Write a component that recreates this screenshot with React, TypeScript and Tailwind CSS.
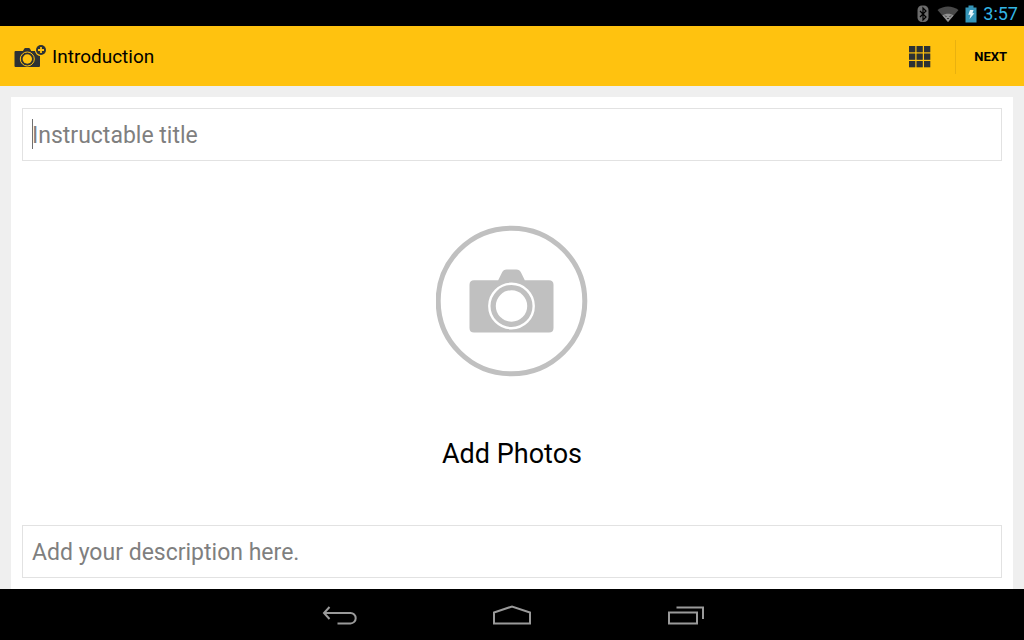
import { useState } from "react";

function BluetoothIcon() {
  return (
    <svg width="12" height="18" viewBox="0 0 12 18" fill="none" aria-hidden="true">
      <rect x="0.5" y="0.5" width="11" height="16.5" rx="4.500" fill="#6b6b6b" />
      <path d="M3 6l6 6-3 3V3l3 3-6 6" stroke="#000" strokeWidth="1.2" />
    </svg>
  );
}

function WifiIcon() {
  return (
    <svg width="22" height="18" viewBox="0 0 22 18" aria-hidden="true">
      <path d="M0.5 5C6.5 0.3 15.5 0.3 21.5 5L11 17z" fill="#484848" />
      <path d="M5.4 10.6C8.5 8.2 13.5 8.2 16.6 10.6L11 17z" fill="#909090" />
      <path d="M8 10.5l1.5 1.5M14 10.5l-1.5 1.5M10 13.5h2" stroke="#333" strokeWidth="1" />
    </svg>
  );
}

function BatteryIcon() {
  return (
    <svg width="12" height="18" viewBox="0 0 12 18" aria-hidden="true">
      <path d="M3.5 0.5h5v2h3V17.5H0.5V2.5h3z" fill="#3595b8" />
      <path d="M5 5h3.6L7.4 8.3h2L4.5 14l1-4.3H3.3z" fill="#e8f6fc" />
    </svg>
  );
}

function CameraPlusIcon() {
  return (
    <svg width="32" height="24" viewBox="0 0 32 24" aria-hidden="true">
      <path
        d="M1.5 6H9l1.2-2.2Q10.6 3 11.4 3h3.4q.8 0 1.2.8L17.200 6H25q1 0 1 1v14q0 1-1 1H1.500q-1 0-1-1V7q0-1 1-1z"
        fill="#2d3134"
      />
      <circle cx="13.300" cy="14" r="7" fill="none" stroke="#ffc20f" strokeWidth="1" />
      <circle cx="13.300" cy="14" r="4.700" fill="#ffc20f" />
      <circle cx="27" cy="5" r="6.200" fill="#ffc20f" />
      <circle cx="27" cy="5" r="5" fill="#2d3134" />
      <path d="M27 2v6M24 5h6" stroke="#ffc20f" strokeWidth="1.800" />
    </svg>
  );
}

function GridIcon() {
  return (
    <svg width="22" height="22" viewBox="0 0 22 22" fill="#2d3134" aria-hidden="true">
      {[0, 7.5, 15].map((y) =>
        [0, 7.5, 15].map((x) => <rect key={`${x}-${y}`} x={x} y={y} width="6.300" height="6.300" />)
      )}
    </svg>
  );
}

function PhotoIcon() {
  return (
    <svg width="152" height="152" viewBox="0 0 152 152" aria-hidden="true">
      <ellipse cx="75.500" cy="76" rx="73.300" ry="72.800" fill="none" stroke="#c0c0c0" strokeWidth="5" />
      <path
        d="M38 55.200H62.200L66 47.500Q67.400 44.500 70.500 44.500H80.500Q83.600 44.500 85 47.500L88.800 55.200H113q4.500 0 4.500 4.500V103q0 4.500-4.500 4.500H38q-4.500 0-4.500-4.500V59.700q0-4.500 4.500-4.500z"
        fill="#c0c0c0"
      />
      <circle cx="75.500" cy="81" r="22.200" fill="none" stroke="#fff" strokeWidth="2.400" />
      <circle cx="75.500" cy="81" r="15.700" fill="#fff" />
    </svg>
  );
}

function StatusBar() {
  return (
    <div className="flex h-[26px] items-center justify-end bg-black pt-0.5 pr-1.5">
      <BluetoothIcon />
      <span className="ml-2">
        <WifiIcon />
      </span>
      <span className="ml-1.5">
        <BatteryIcon />
      </span>
      <span className="ml-1.5 text-lg text-[#33b5e5]">3:57</span>
    </div>
  );
}

function ActionBar() {
  return (
    <header className="flex h-[60px] items-center bg-[#ffc20f] pt-0.5">
      <div className="flex flex-1 items-center gap-1.5 pl-3.5">
        <CameraPlusIcon />
        <h1 className="text-[19px] text-black">Introduction</h1>
      </div>
      <button type="button" aria-label="Steps" className="px-6 py-2">
        <GridIcon />
      </button>
      <div className="h-[34px] w-px bg-[#e9b10f]" />
      <button type="button" className="pr-[17px] pl-[18px] py-2 text-[13px] font-bold text-black">
        NEXT
      </button>
    </header>
  );
}

function NavBar() {
  return (
    <nav className="grid h-[51px] shrink-0 grid-cols-[1fr_172px_174px_1fr] items-center bg-black pt-1">
      <button type="button" aria-label="Back" className="mr-[-19px] justify-self-end">
        <svg width="36" height="24" viewBox="0 0 36 24" fill="none" stroke="#9a9a9a" strokeWidth="2">
          <path d="M7.500 2L2 8l5.500 6M2 8H28.500a5.200 5.200 0 0 1 0 10.400H15.500" />
        </svg>
      </button>
      <button type="button" aria-label="Home" className="mr-[-20px] justify-self-end">
        <svg width="38" height="24" viewBox="0 0 38 24" fill="none" stroke="#9a9a9a" strokeWidth="2">
          <path d="M1 18.500V7.500L19 1.500l18 6v11z" />
        </svg>
      </button>
      <button type="button" aria-label="Recent apps" className="mr-[-19px] justify-self-end">
        <svg width="36" height="24" viewBox="0 0 36 24" fill="none" stroke="#9a9a9a" strokeWidth="2">
          <path d="M1 7.500h28v11H1zM8.500 2.500H35V14" />
        </svg>
      </button>
    </nav>
  );
}

export default function App() {
  const [title, setTitle] = useState("");
  const [description, setDescription] = useState("");

  return (
    <div className="flex min-h-screen flex-col bg-[#efefef] font-[Roboto,sans-serif]">
      <StatusBar />
      <ActionBar />
      <main className="mx-[11px] mt-[11px] flex flex-1 flex-col bg-white p-[11px]">
        <div className="relative">
          <input
            type="text"
            aria-label="Instructable title"
            placeholder="Instructable title"
            value={title}
            onChange={(e) => setTitle(e.target.value)}
            className="h-[53px] w-full border border-[#e2e2e2] px-[9px] pt-0.5 text-[23px] text-black outline-none placeholder:text-[#7f7f7f]"
          />
          {/* Text cursor */}
          {title === "" && <span className="pointer-events-none absolute top-[11px] left-2.5 h-[30px] w-px bg-[#707070]" />}
        </div>
        <button type="button" className="flex flex-1 flex-col items-center justify-center gap-[57px] pt-3">
          <PhotoIcon />
          <span className="text-[27px] leading-10 text-black">Add Photos</span>
        </button>
        <input
          type="text"
          aria-label="Description"
          placeholder="Add your description here."
          value={description}
          onChange={(e) => setDescription(e.target.value)}
          className="h-[53px] w-full border border-[#e2e2e2] px-[9px] pt-0.5 text-[23px] text-black outline-none placeholder:text-[#7f7f7f]"
        />
      </main>
      <NavBar />
    </div>
  );
}
